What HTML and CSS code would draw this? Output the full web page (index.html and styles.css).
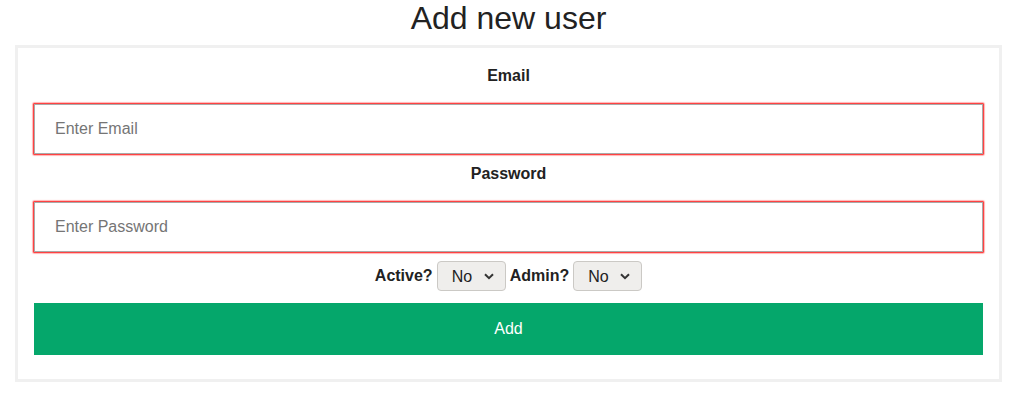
FILE: index.html
```html
<!DOCTYPE html>
<html>
<head>
<meta charset="utf-8">
<link rel="stylesheet" href="styles.css">
</head>
<body>
<main class="page">
<h1 class="title">Add new user</h1>
<form class="card">
  <label class="field-label" for="email">Email</label>
  <input class="field" id="email" type="email" placeholder="Enter Email">
  <label class="field-label" for="password">Password</label>
  <input class="field" id="password" type="password" placeholder="Enter Password">
  <div class="options">
    <label class="opt-label" for="active">Active?</label>
    <span class="select-wrap">
      <select id="active" class="select"><option>No</option><option>Yes</option></select>
      <svg class="chev" width="10" height="7" viewBox="0 0 10 7"><path d="M1 1.2l4 4 4-4" fill="none" stroke="#333" stroke-width="2"/></svg>
    </span>
    <label class="opt-label" for="admin">Admin?</label>
    <span class="select-wrap">
      <select id="admin" class="select"><option>No</option><option>Yes</option></select>
      <svg class="chev" width="10" height="7" viewBox="0 0 10 7"><path d="M1 1.2l4 4 4-4" fill="none" stroke="#333" stroke-width="2"/></svg>
    </span>
  </div>
  <button class="submit" type="button">Add</button>
</form>
</main>
</body>
</html>
```

FILE: styles.css
```css
* { box-sizing: border-box; }
body {
  margin: 0;
  font-family: "Liberation Sans", Arial, sans-serif;
  color: #222;
  background: #fff;
}
.page {
  margin-left: 15px;
  width: 987px;
}
.title {
  margin: 0 0 9px;
  font-size: 32px;
  line-height: 36px;
  font-weight: normal;
  text-align: center;
  color: #222;
}
.card {
  margin: 0;
  width: 100%;
  border: 3px solid #f0f0f0;
  padding: 8px 16px 24px;
  display: flex;
  flex-direction: column;
}
.field-label {
  display: block;
  margin: 8px 0 16px;
  line-height: 24px;
  font-size: 16px;
  font-weight: bold;
  text-align: center;
}
.field {
  height: 50px;
  width: 100%;
  border: 1px solid #a9a9a9;
  box-shadow: 0 0 1.5px 1px rgb(255, 0, 0);
  padding: 0 20px;
  font-family: "Liberation Sans", Arial, sans-serif;
  font-size: 16px;
  color: #222;
  outline: none;
}
.field::placeholder { color: #757575; }
.options {
  margin-top: 9px;
  height: 30px;
  display: flex;
  justify-content: center;
  align-items: center;
  gap: 4px;
}
.opt-label {
  font-size: 16px;
  font-weight: bold;
}
.select-wrap {
  position: relative;
  display: inline-block;
}
.select {
  appearance: none;
  -webkit-appearance: none;
  width: 69px;
  height: 30px;
  padding: 0 0 0 14px;
  border: 1px solid #cbc9c5;
  border-radius: 4px;
  background: #efeeec;
  font-family: "Liberation Sans", Arial, sans-serif;
  font-size: 16px;
  color: #222;
}
.chev {
  position: absolute;
  right: 12px;
  top: 12px;
  pointer-events: none;
}
.submit {
  margin-top: 12px;
  height: 52px;
  width: 100%;
  border: none;
  background: #05a76b;
  color: #fff;
  font-family: "Liberation Sans", Arial, sans-serif;
  font-size: 16px;
}
```
